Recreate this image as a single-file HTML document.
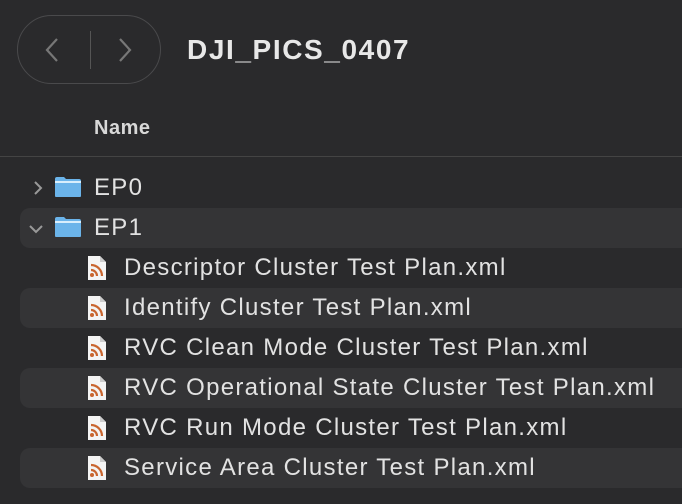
<html><head><style>
body{margin:0;width:682px;height:504px;background:#2a2a2c;font-family:"Liberation Sans",sans-serif;color:#e6e6e6;position:relative;overflow:hidden}
.nav{position:absolute;left:17px;top:15px;width:144px;height:69px;border:1px solid #4a4a4c;border-radius:35px;box-sizing:border-box}
.nav .sep{position:absolute;left:72px;top:15px;width:1px;height:38px;background:#555}
.title{position:absolute;left:187px;top:34px;font-size:28px;font-weight:bold;color:#e8e8e8;letter-spacing:1.6px}
.hdr{position:absolute;left:94px;top:117px;font-size:20px;font-weight:bold;color:#d8d8d8;letter-spacing:0.5px}
.line{position:absolute;left:0;top:156px;width:682px;height:1px;background:#444}
.row{position:absolute;left:20px;width:680px;height:40px;border-radius:10px 0 0 10px}
.alt{background:#343436}
.t{position:absolute;font-size:24px;color:#e2e2e2;white-space:nowrap;letter-spacing:1.3px}
.fold{position:absolute;width:28px;height:22px}
.file{position:absolute;width:20px;height:26px}
</style></head><body>
<div class="nav"><div class="sep"></div>
<svg style="position:absolute;left:26px;top:21px" width="16" height="26"><path d="M13 2 L3 13 L13 24" stroke="#777" stroke-width="2.2" fill="none"/></svg>
<svg style="position:absolute;left:99px;top:21px" width="16" height="26"><path d="M3 2 L13 13 L3 24" stroke="#777" stroke-width="2.2" fill="none"/></svg>
</div>
<div class="title">DJI_PICS_0407</div>
<div class="hdr">Name</div>
<div class="line"></div>
<div class="row alt" style="top:208px"></div>
<div class="row alt" style="top:288px"></div>
<div class="row alt" style="top:368px"></div>
<div class="row alt" style="top:448px"></div>
<svg style="position:absolute;left:33px;top:180px" width="10" height="16"><path d="M2 2 L8 8 L2 14" stroke="#999" stroke-width="2" fill="none"/></svg>
<svg style="position:absolute;left:28px;top:224px" width="16" height="10"><path d="M2 2 L8 8 L14 2" stroke="#999" stroke-width="2" fill="none"/></svg>
<svg class="fold" style="left:54px;top:176px" viewBox="0 0 28 22"><path d="M1 3 Q1 1 3 1 H10 L12 3 H25 Q27 3 27 5 V20 Q27 21 26 21 H2 Q1 21 1 20Z" fill="#6bb4ea"/><rect x="1" y="5" width="26" height="2" fill="#d8eefc"/></svg>
<svg class="fold" style="left:54px;top:216px" viewBox="0 0 28 22"><path d="M1 3 Q1 1 3 1 H10 L12 3 H25 Q27 3 27 5 V20 Q27 21 26 21 H2 Q1 21 1 20Z" fill="#6bb4ea"/><rect x="1" y="5" width="26" height="2" fill="#d8eefc"/></svg>
<div class="t" style="left:94px;top:174px">EP0</div>
<div class="t" style="left:94px;top:214px">EP1</div>
<div id="files"></div>
<script>
var n=["Descriptor Cluster Test Plan.xml","Identify Cluster Test Plan.xml","RVC Clean Mode Cluster Test Plan.xml","RVC Operational State Cluster Test Plan.xml","RVC Run Mode Cluster Test Plan.xml","Service Area Cluster Test Plan.xml"],h="";
n.forEach(function(s,i){var y=248+i*40;
h+='<svg class="file" style="left:87px;top:'+(y+7)+'px" viewBox="0 0 20 26"><path d="M1 1 H13 L19 7 V25 H1Z" fill="#f4f4f4"/><path d="M13 1 V7 H19" fill="#ccc"/><circle cx="5" cy="20" r="2" fill="#c9652f"/><path d="M4 15 A6 6 0 0 1 10 21" stroke="#c9652f" stroke-width="2.2" fill="none"/><path d="M4 10 A11 11 0 0 1 15 21" stroke="#c9652f" stroke-width="2.2" fill="none"/></svg>';
h+='<div class="t" style="left:124px;top:'+(y+6)+'px">'+s+'</div>';});
document.getElementById("files").innerHTML=h;
</script>
</body></html>
